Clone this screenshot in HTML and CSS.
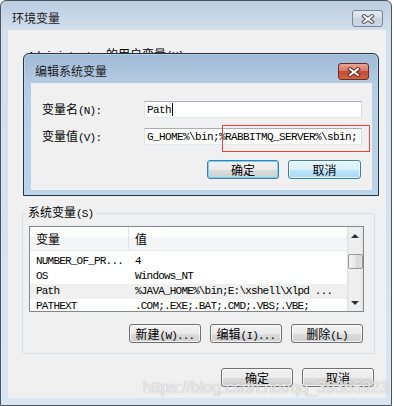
FILE: index.html
```html
<!DOCTYPE html>
<html lang="zh-CN">
<head>
  <meta charset="UTF-8">
  <title>环境变量</title>
  <link rel="stylesheet" href="styles.css">
</head>
<body>
  <div class="window">
    <div class="titlebar">
      <span class="title">环境变量</span>
      <span class="close">
        <svg width="14" height="10" viewBox="0 0 14 10"><path d="M3 2 L11 8 M11 2 L3 8" stroke="#3d4652" stroke-width="3.8" stroke-linecap="square"/><path d="M3 2 L11 8 M11 2 L3 8" stroke="#fff" stroke-width="2" stroke-linecap="square"/></svg>
      </span>
    </div>
    <div class="client">
      <p class="user-caption"><span class="en">Administrator</span> 的用户变量<span class="en">(U)</span></p>
      <div class="user-vars"></div>
      <fieldset class="group">
        <legend>系统变量<span class="en">(S)</span></legend>
        <div class="listview">
          <div class="list-main">
            <div class="list-head">
              <div class="col-name">变量</div>
              <div class="col-value">值</div>
            </div>
            <div class="list-body">
              <div class="list-row"><div class="col-name en">NUMBER_OF_PR...</div><div class="col-value en">4</div></div>
              <div class="list-row"><div class="col-name en">OS</div><div class="col-value en">Windows_NT</div></div>
              <div class="list-row selected"><div class="col-name en">Path</div><div class="col-value en">%JAVA_HOME%\bin;E:\xshell\Xlpd ...</div></div>
              <div class="list-row"><div class="col-name en">PATHEXT</div><div class="col-value en">.COM;.EXE;.BAT;.CMD;.VBS;.VBE;</div></div>
            </div>
          </div>
          <div class="scrollbar">
            <span class="arrow up"></span>
            <span class="thumb"></span>
            <span class="arrow down"></span>
          </div>
        </div>
        <div class="group-buttons">
          <button class="btn">新建<span class="en">(W)...</span></button>
          <button class="btn">编辑<span class="en">(I)...</span></button>
          <button class="btn">删除<span class="en">(L)</span></button>
        </div>
      </fieldset>
      <div class="footer-buttons">
        <button class="btn">确定</button>
        <button class="btn">取消</button>
      </div>
    </div>

    <div class="dialog">
      <div class="titlebar dialog-titlebar">
        <span class="title">编辑系统变量</span>
        <span class="close close-red">
          <svg width="14" height="10" viewBox="0 0 14 10"><path d="M3 2 L11 8 M11 2 L3 8" stroke="#4a1a12" stroke-width="3.8" stroke-linecap="square"/><path d="M3 2 L11 8 M11 2 L3 8" stroke="#fff" stroke-width="2" stroke-linecap="square"/></svg>
        </span>
      </div>
      <div class="dialog-body">
        <div class="field-grid">
          <label for="var-name">变量名<span class="en">(N):</span></label>
          <div class="textbox" id="var-name"><span class="en value">Path</span><span class="caret"></span></div>
          <label for="var-value">变量值<span class="en">(V):</span></label>
          <div class="textbox" id="var-value"><span class="en value">G_HOME%\bin;%RABBITMQ_SERVER%\sbin;</span></div>
        </div>
        <div class="dialog-buttons">
          <button class="btn btn-default">确定</button>
          <button class="btn btn-hot">取消</button>
        </div>
        <div class="mark"></div>
      </div>
    </div>

    <div class="watermark">https://blog.csdn.net/qq_39365923</div>
  </div>
</body>
</html>
```

FILE: styles.css
```css
* {
  margin: 0;
  padding: 0;
}
body {
  background: #fff;
  font-family: "Noto Sans CJK SC", sans-serif;
  font-size: 12px;
  line-height: 12px;
  color: #000;
}
.en {
  font-family: "Liberation Mono", monospace;
  font-size: 11px;
  letter-spacing: -0.8px;
}
.en.value {
  letter-spacing: -0.6px;
}
.window {
  position: relative;
  width: 392px;
  height: 406px;
  box-sizing: border-box;
  border: 1px solid #4d5560;
  border-radius: 6px 6px 0 0;
  background: linear-gradient(#bccde2, #d3dfed 30px, #d9e5f2);
  padding: 0 5px 7px 7px;
  display: flex;
  flex-direction: column;
}
.titlebar {
  height: 29px;
  display: flex;
  justify-content: space-between;
  align-items: flex-start;
  flex-shrink: 0;
}
.title {
  margin: 10px 0 0 4px;
  line-height: 14px;
  color: #1a1a1a;
}
.close {
  margin: 9px 3px 0 0;
  width: 31px;
  height: 17px;
  box-sizing: border-box;
  border: 1px solid #7a8595;
  border-radius: 3px;
  background: linear-gradient(#e4ebf3, #d3dde9 50%, #c6d2e0 50%, #ccd8e6);
  display: flex;
  align-items: center;
  justify-content: center;
}
.close-red {
  border-color: #6a2b20;
  background: linear-gradient(#e8a594, #d87a64 45%, #c54c31 50%, #cf6247);
}
.client {
  height: 368px;
  background: #f0f0f0;
  flex-shrink: 0;
}
.user-caption {
  margin: 18px 0 0 20px;
  height: 12px;
}
.user-vars {
  height: 146px;
}
.group {
  margin: 0 11px 0 14px;
  padding: 6px 10px 10px 6px;
  border: 1px solid #d5dfe5;
  border-radius: 3px;
  min-width: 0;
}
.group legend {
  padding: 0 2px;
  margin-left: -3px;
  line-height: 12px;
}
.listview {
  display: flex;
  height: 86px;
  box-sizing: border-box;
  border: 1px solid #828790;
  background: #fff;
}
.list-main {
  flex: 1;
  overflow: hidden;
}
.list-head {
  display: flex;
  height: 24px;
  box-sizing: border-box;
  align-items: center;
  background: linear-gradient(#fff 42%, #f4f5f7 42%);
  border-bottom: 1px solid #e8eaee;
}
.list-head .col-name {
  height: 100%;
  display: flex;
  align-items: center;
  border-right: 1px solid #e3e5e8;
}
.list-body {
  padding-top: 3px;
}
.list-row {
  display: flex;
  height: 15px;
  line-height: 15px;
  white-space: nowrap;
}
.list-row.selected {
  background: #f0f0f0;
}
.col-name {
  width: 99px;
  box-sizing: border-box;
  padding-left: 6px;
  flex-shrink: 0;
}
.col-value {
  padding-left: 6px;
}
.scrollbar {
  width: 16px;
  background: linear-gradient(90deg, #e2e2e2, #efefef 20%, #efefef 80%, #e2e2e2);
  display: flex;
  flex-direction: column;
  align-items: center;
}
.arrow {
  height: 17px;
  width: 100%;
  display: flex;
  align-items: center;
  justify-content: center;
}
.arrow::before {
  content: "";
  border-left: 4px solid transparent;
  border-right: 4px solid transparent;
}
.arrow.up::before {
  border-bottom: 4px solid #2e2e2e;
}
.arrow.down {
  margin-top: auto;
}
.arrow.down::before {
  border-top: 4px solid #2e2e2e;
}
.thumb {
  width: 15px;
  height: 15px;
  margin-top: 10px;
  box-sizing: border-box;
  border: 1px solid #979797;
  border-radius: 2px;
  background: linear-gradient(90deg, #f4f4f4, #e6e6e6 50%, #d8d8d8 50%, #dedede);
}
.group-buttons,
.footer-buttons,
.dialog-buttons {
  display: flex;
  justify-content: flex-end;
  gap: 9px;
}
.group-buttons {
  margin-top: 12px;
  padding-right: 1px;
}
.footer-buttons {
  margin: 14px 12px 0 0;
}
.btn {
  width: 72px;
  height: 19px;
  box-sizing: border-box;
  border: 1px solid #707070;
  border-radius: 3px;
  background: linear-gradient(#f2f2f2, #ebebeb 50%, #dddddd 50%, #cfcfcf);
  box-shadow: inset 0 0 0 1px rgba(255, 255, 255, 0.7);
  font-family: "Noto Sans CJK SC", sans-serif;
  font-size: 12px;
  line-height: 17px;
  color: #000;
}
.btn-default {
  border-color: #3c7fb1;
  box-shadow: inset 0 0 0 1px #6fd6f7;
}
.btn-hot {
  width: 73px;
  border-color: #3c7fb1;
  background: linear-gradient(#eaf6fd, #d9f0fc 50%, #bee6fd 50%, #a7d9f5);
}
.dialog {
  position: absolute;
  left: 22px;
  top: 52px;
  width: 356px;
  height: 143px;
  box-sizing: border-box;
  border: 1px solid #2a323c;
  border-radius: 6px 6px 0 0;
  background: linear-gradient(#a0b9d6, #b6cce4 30px, #bcd3ea);
  box-shadow: inset 0 0 0 1px rgba(170, 225, 250, 0.7);
  padding: 0 6px 5px 7px;
  display: flex;
  flex-direction: column;
}
.dialog-body {
  flex: 1;
  position: relative;
  background: #f0f0f0;
  padding-top: 18px;
}
.field-grid {
  display: grid;
  grid-template-columns: 102px 218px;
  row-gap: 10px;
  padding-left: 11px;
  align-items: center;
}
.textbox {
  height: 17px;
  box-sizing: border-box;
  border: 1px solid;
  border-color: #abadb3 #dbdfe6 #e3e9ef #e2e3ea;
  background: #fff;
  padding: 0 2px;
  display: flex;
  align-items: center;
  overflow: hidden;
  white-space: nowrap;
}
.caret {
  width: 1px;
  height: 13px;
  margin-left: 1px;
  background: #000;
}
.dialog-buttons {
  margin: 15px 11px 0 0;
}
.mark {
  position: absolute;
  left: 191px;
  top: 42px;
  width: 148px;
  height: 27px;
  box-sizing: border-box;
  border: 1px solid #e8403a;
}
.watermark {
  position: absolute;
  left: 142px;
  top: 378px;
  font-family: "Liberation Sans", sans-serif;
  font-size: 16px;
  line-height: 18px;
  color: rgba(255, 255, 255, 0.8);
  text-shadow: 0 0 1px rgba(110, 110, 110, 0.7);
}
```
